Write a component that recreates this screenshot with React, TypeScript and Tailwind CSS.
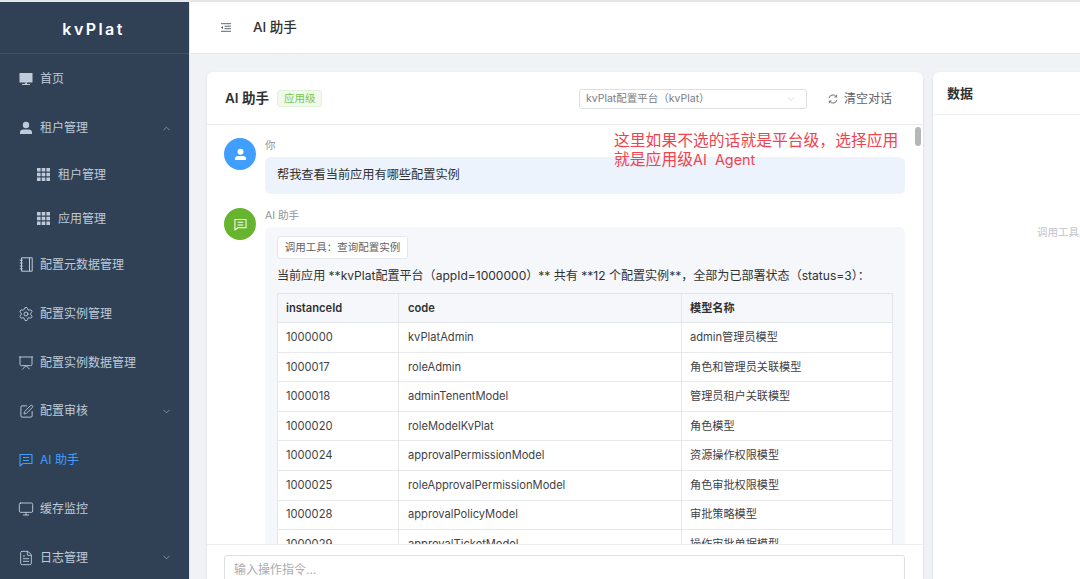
import { ChevronDown, ChevronUp, FileText, Monitor, Presentation, Settings, SquarePen } from "lucide-react"

const FONT = "font-['Inter','Noto_Sans_CJK_SC',sans-serif]"

function HomeIcon() {
  return (
    <svg width="14" height="14" viewBox="0 0 14 14" fill="currentColor">
      <rect x="0.5" y="1" width="13" height="9.5" rx="0.5" />
      <rect x="6" y="10.5" width="2" height="2" />
      <rect x="3" y="12" width="8" height="1" />
    </svg>
  )
}

function UserIcon({ size = 14 }: { size?: number }) {
  return (
    <svg width={size} height={size} viewBox="0 0 14 14" fill="currentColor">
      <circle cx="7" cy="4" r="3.2" />
      <path d="M1 13v-1.6C1 9.6 2.6 8.6 4.2 8.6h5.6c1.6 0 3.2 1 3.2 2.8V13z" />
    </svg>
  )
}

function GridIcon() {
  return (
    <svg width="13" height="13" viewBox="0 0 13 13" fill="currentColor">
      <path d="M0 0h3.6v3.6H0zM4.7 0h3.6v3.6H4.7zM9.4 0H13v3.6H9.4zM0 4.7h3.6v3.6H0zM4.7 4.7h3.6v3.6H4.7zM9.4 4.7H13v3.6H9.4zM0 9.4h3.6V13H0zM4.7 9.4h3.6V13H4.7zM9.4 9.4H13V13H9.4z" />
    </svg>
  )
}

function NotebookIcon() {
  return (
    <svg width="14" height="15" viewBox="0 0 14 15" fill="none" stroke="currentColor" strokeWidth="1">
      <path d="M2.5 0.8h10.7v13.4H2.5zM10.5 0.8v13.4" />
      <path d="M0.8 3.2h3M0.8 6h3M0.8 9h3M0.8 11.8h3" />
    </svg>
  )
}

function ChatIcon({ size = 14 }: { size?: number }) {
  return (
    <svg width={size} height={size} viewBox="0 0 14 14" fill="none" stroke="currentColor" strokeWidth="1.1">
      <path d="M1 1.5h12v9H4l-3 2.5z" strokeLinejoin="round" />
      <path d="M4 4.5h6M4 7.5h6" />
    </svg>
  )
}

function FoldIcon() {
  return (
    <svg width="10" height="9" viewBox="0 0 10 9" fill="none" stroke="#4b5563" strokeWidth="0.9">
      <path d="M0 0.7h10M3.5 3.2H10M3.5 5.7H10M0 8.3h10" />
      <path d="M0 4.5l2-1.4v2.8z" fill="#4b5563" stroke="none" />
    </svg>
  )
}

const rows = [
  ["1000000", "kvPlatAdmin", "admin管理员模型"],
  ["1000017", "roleAdmin", "角色和管理员关联模型"],
  ["1000018", "adminTenentModel", "管理员租户关联模型"],
  ["1000020", "roleModelKvPlat", "角色模型"],
  ["1000024", "approvalPermissionModel", "资源操作权限模型"],
  ["1000025", "roleApprovalPermissionModel", "角色审批权限模型"],
  ["1000028", "approvalPolicyModel", "审批策略模型"],
  ["1000029", "approvalTicketModel", "操作审批单据模型"],
]

function NavItem({
  icon,
  label,
  arrow,
  active,
}: {
  icon: React.ReactNode
  label: string
  arrow?: "up" | "down"
  active?: boolean
}) {
  return (
    <div className={`flex h-[48.8px] shrink-0 items-center pl-[18px] pr-[17px] text-[12px] ${active ? "text-[#409eff]" : "text-[#bfcbd9]"}`}>
      <span className="flex w-[16px] justify-center">{icon}</span>
      <span className="ml-[6px] flex-1 whitespace-nowrap">{label}</span>
      {arrow === "up" && <ChevronUp size={11} strokeWidth={1.2} />}
      {arrow === "down" && <ChevronDown size={11} strokeWidth={1.2} />}
    </div>
  )
}

function SubItem({ label }: { label: string }) {
  return (
    <div className="flex h-[44px] shrink-0 items-center pl-[37px] text-[12px] text-[#bfcbd9]">
      <GridIcon />
      <span className="ml-[8px]">{label}</span>
    </div>
  )
}

export default function App() {
  return (
    <div className={`relative flex h-[579px] w-[1080px] overflow-hidden border-t-2 border-[#e4e6ea] bg-[#f0f2f5] ${FONT}`}>
      <aside className="flex w-[189px] shrink-0 flex-col overflow-hidden bg-[#304156]">
        <div className="flex h-[52px] shrink-0 items-center justify-center border-b border-[#3f5068] pr-[2px] pt-[2px] text-[16px] font-semibold tracking-[2.4px] text-white">
          kvPlat
        </div>
        <nav className="flex flex-col pt-px">
          <NavItem icon={<HomeIcon />} label="首页" />
          <NavItem icon={<UserIcon />} label="租户管理" arrow="up" />
          <SubItem label="租户管理" />
          <SubItem label="应用管理" />
          <NavItem icon={<NotebookIcon />} label="配置元数据管理" />
          <NavItem icon={<Settings size={16} strokeWidth={1.4} />} label="配置实例管理" />
          <NavItem icon={<Presentation size={16} strokeWidth={1.4} />} label="配置实例数据管理" />
          <NavItem icon={<SquarePen size={15} strokeWidth={1.5} />} label="配置审核" arrow="down" />
          <NavItem icon={<ChatIcon />} label="AI 助手" active />
          <NavItem icon={<Monitor size={16} strokeWidth={1.4} />} label="缓存监控" />
          <NavItem icon={<FileText size={16} strokeWidth={1.4} />} label="日志管理" arrow="down" />
        </nav>
      </aside>

      <div className="flex min-w-0 flex-1 flex-col border-l border-[#e4e6ea]">
        <header className="flex h-[52px] shrink-0 items-center border-b border-[#e6e8eb] bg-white pl-[31px]">
          <FoldIcon />
          <span className="ml-[22px] text-[13.5px] font-medium text-[#303133]">AI 助手</span>
        </header>

        <div className="flex min-h-0 flex-1 gap-[10px] pl-[17px] pt-[18px]">
          <section className="flex w-[716px] shrink-0 flex-col overflow-hidden rounded-t-[6px] bg-white shadow-sm">
            <div className="flex h-[53px] shrink-0 items-center border-b border-[#e9ebef] pl-[18px] pr-[31px] pt-px">
              <span className="text-[13.5px] font-semibold text-[#303133]">AI 助手</span>
              <span className="ml-[8px] flex h-[17px] items-center rounded-[3px] border border-[#e1f3d8] bg-[#f0f9eb] px-[6px] text-[10.5px] text-[#74c754]">
                应用级
              </span>
              <div className="ml-auto flex h-[20px] w-[228px] items-center justify-between rounded-[3px] border border-[#dcdfe6] pl-[6px] pr-[9px] text-[10.5px] text-[#7a7d83]">
                <span className="whitespace-nowrap">kvPlat配置平台（kvPlat）</span>
                <ChevronDown size={12} strokeWidth={1} className="text-[#b5b8bf]" />
              </div>
              <div className="ml-[21px] flex items-center gap-[6px] text-[12px] text-[#606266]">
                <svg width="10" height="10" viewBox="0 0 10 10" fill="none" stroke="#606266" strokeWidth="0.9">
                  <path d="M1 4.2A4 4 0 0 1 8.2 2.6M9 5.8A4 4 0 0 1 1.8 7.4" />
                  <path d="M8.6 0.8v2.2H6.4M1.4 9.2V7h2.2" />
                </svg>
                <span className="whitespace-nowrap">清空对话</span>
              </div>
            </div>

            <div className="min-h-0 flex-1 overflow-hidden pl-[17px] pr-[18px] pt-[14px]">
              <div className="flex gap-[9px]">
                <div className="-mt-px flex h-[32px] w-[32px] shrink-0 items-center justify-center rounded-full bg-[#409eff] text-white">
                  <UserIcon size={13} />
                </div>
                <div className="min-w-0 flex-1">
                  <div className="h-[18px] text-[10.5px] leading-[14px] text-[#909399]">你</div>
                  <div className="flex h-[37px] items-center rounded-[6px] bg-[#ecf3fd] px-[12px] text-[12.2px] text-[#303133]">
                    帮我查看当前应用有哪些配置实例
                  </div>
                </div>
              </div>

              <div className="mt-[15px] flex gap-[9px]">
                <div className="-mt-px flex h-[32px] w-[32px] shrink-0 items-center justify-center rounded-full bg-[#67b52f] text-white">
                  <ChatIcon size={13} />
                </div>
                <div className="min-w-0 flex-1">
                  <div className="h-[18px] text-[10.5px] leading-[14px] text-[#909399]">AI 助手</div>
                  <div className="rounded-[6px] bg-[#f5f7fa] px-[12px] pb-[12px] pt-[9px]">
                    <div className="flex h-[23px] w-[131px] items-center justify-center whitespace-nowrap rounded-[3px] border border-[#e4e7ed] bg-white text-[10.5px] text-[#606266]">
                      调用工具：查询配置实例
                    </div>
                    <p className="mt-[8px] h-[26px] whitespace-nowrap text-[12.05px] leading-[17px] text-[#303133]">
                      当前应用 **kvPlat配置平台（appId=1000000）** 共有 **12 个配置实例**，全部为已部署状态（status=3）：
                    </p>
                    <table className="w-[616px] table-fixed border-collapse text-[11.15px] text-[#3f4247]">
                      <thead>
                        <tr className="h-[29px] bg-[#f5f7fa] text-left font-semibold text-[#303133]">
                          <th className="w-[121px] border border-[#e2e5ea] pl-[8px] font-semibold">instanceId</th>
                          <th className="w-[283px] border border-[#e2e5ea] pl-[9px] font-semibold">code</th>
                          <th className="border border-[#e2e5ea] pl-[8px] font-semibold">模型名称</th>
                        </tr>
                      </thead>
                      <tbody>
                        {rows.map((row) => (
                          <tr key={row[0]} className="h-[29.6px] bg-white">
                            <td className="border border-[#e6e8ec] pl-[8px]">{row[0]}</td>
                            <td className="border border-[#e6e8ec] pl-[9px]">{row[1]}</td>
                            <td className="border border-[#e6e8ec] pl-[8px]">{row[2]}</td>
                          </tr>
                        ))}
                      </tbody>
                    </table>
                  </div>
                </div>
              </div>
            </div>

            <div className="h-[35px] shrink-0 border-t border-[#eceef1] bg-white pl-[17px] pr-[18px] pt-[10px]">
              <div className="flex h-[30px] items-center rounded-[3px] border border-[#dcdfe6] pl-[9px] text-[12px] text-[#a8abb2]">
                输入操作指令...
              </div>
            </div>
          </section>

          <section className="w-[220px] shrink-0 rounded-t-[6px] bg-white shadow-sm">
            <div className="flex h-[43px] items-center border-b border-[#eceef1] pl-[14px] pt-[2px] text-[13px] font-semibold text-[#303133]">
              数据
            </div>
            <div className="whitespace-nowrap pl-[104px] pt-[110px] text-[10.5px] text-[#c0c4cc]">调用工具后显示数据</div>
          </section>
        </div>
      </div>

      <div className="absolute left-[915px] top-[125px] h-[19px] w-[6px] rounded-full bg-[#b4b6ba]" />
      <div className="absolute left-[614px] top-[129px] text-[15.8px] leading-[19px] text-[#f0434f]">
        这里如果不选的话就是平台级，选择应用
        <br />
        就是应用级<span className="text-[14.4px]">AI&nbsp; Agent</span>
      </div>
    </div>
  )
}
